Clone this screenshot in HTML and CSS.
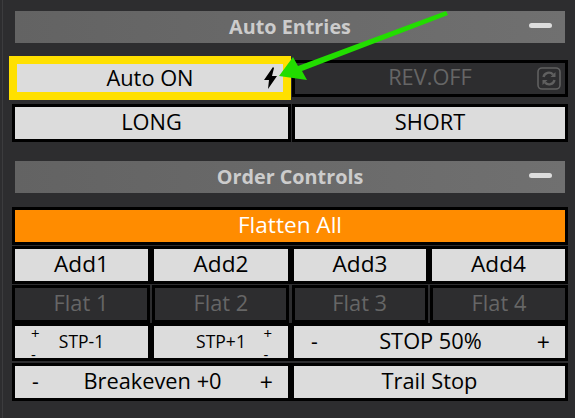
FILE: index.html
```html
<!DOCTYPE html>
<html lang="en">
<head>
  <meta charset="UTF-8" />
  <title>Order Panel</title>
  <link rel="stylesheet" href="styles.css">
</head>
<body>

<div class="panel">
  <div class="section-head head-first">
    <span>Auto Entries</span>
    <i class="collapse"></i>
  </div>

  <div class="row-auto">
    <div class="btn-auto">
      Auto ON
      <svg class="bolt" width="13" height="22" viewBox="0 0 13 22"><path d="M9 0 L0 13 L5 13 L4 22 L13 9 L8 9 L10 1 Z" fill="#000"/></svg>
    </div>
    <div class="btn off btn-rev">
      REV.OFF
      <svg class="sync" width="26" height="25" viewBox="0 0 26 25" fill="none" stroke="#606060">
        <rect x="2" y="2" width="22" height="21" rx="4" stroke-width="1.6"/>
        <path d="M7.5 11 A5.5 5.5 0 0 1 17 8.5" stroke-width="2.4"/>
        <path d="M18.5 14 A5.5 5.5 0 0 1 9 16.5" stroke-width="2.4"/>
        <path d="M14.5 11 L19.5 11 L19.5 6 Z M11.5 14 L6.5 14 L6.5 19 Z" fill="#606060" stroke="none"/>
      </svg>
    </div>
  </div>

  <div class="row row-two">
    <div class="btn">LONG</div>
    <div class="btn">SHORT</div>
  </div>

  <div class="section-head head-second">
    <span>Order Controls</span>
    <i class="collapse"></i>
  </div>

  <div class="controls">
    <div class="btn btn-flatten">Flatten All</div>

    <div class="row row-four">
      <div class="btn">Add1</div>
      <div class="btn">Add2</div>
      <div class="btn">Add3</div>
      <div class="btn">Add4</div>
    </div>

    <div class="row row-flat">
      <div class="btn off">Flat 1</div>
      <div class="btn off">Flat 2</div>
      <div class="btn off">Flat 3</div>
      <div class="btn off">Flat 4</div>
    </div>

    <div class="row row-stops">
      <div class="btn btn-small">
        <span class="stack stack-left"><b>+</b><b>-</b></span>
        <span>STP-1</span>
      </div>
      <div class="btn btn-small">
        <span>STP+1</span>
        <span class="stack stack-right"><b>+</b><b>-</b></span>
      </div>
      <div class="btn btn-steps"><em>-</em><span>STOP 50%</span><em class="plus">+</em></div>
    </div>

    <div class="row row-bottom">
      <div class="btn btn-steps"><em>-</em><span>Breakeven +0</span><em class="plus">+</em></div>
      <div class="btn">Trail Stop</div>
    </div>
  </div>

  <svg class="arrow" width="575" height="418" viewBox="0 0 575 418">
    <path d="M446 11 L448 15 L302 71 L307 80 L279 76 L293 57 L298 66 Z" fill="#22dd00"/>
  </svg>
</div>

</body>
</html>
```

FILE: styles.css
```css
* {
  box-sizing: border-box;
}

body {
  margin: 0;
  background: #2d2d2f;
  font-family: "Open Sans", "Noto Sans", sans-serif;
  font-size: 21.8px;
  color: #000;
}

.panel {
  position: relative;
  width: 575px;
  height: 418px;
  padding: 11px 7px 0 12px;
  overflow: hidden;
  background: linear-gradient(#3c3c3e, #3c3c3e) 2px 0 / 1px 100% no-repeat;
}

/* section headers */
.section-head {
  position: relative;
  display: flex;
  align-items: center;
  justify-content: center;
  height: 32px;
  margin: 0 3px;
  padding-bottom: 2px;
  background: linear-gradient(to right, #636363, #707070);
  color: #ccc;
  font-size: 19.8px;
  font-weight: 700;
}

.head-second {
  margin-top: 19px;
}

.collapse {
  position: absolute;
  top: 12px;
  right: 13px;
  width: 23px;
  height: 5px;
  border-radius: 3px;
  background: #ddd;
}

/* buttons */
.btn {
  position: relative;
  display: flex;
  align-items: center;
  justify-content: center;
  height: 38px;
  padding-bottom: 3px;
  border: 3px solid #000;
  background: #dcdcdc;
}

.off {
  background: #2d2d2f;
  color: #666;
}

.row-auto {
  display: grid;
  grid-template-columns: 282px 276px;
  align-items: center;
  height: 44px;
  margin: 13px 0 4px -3px;
  gap: 1px;
}

.btn-auto {
  position: relative;
  display: flex;
  align-items: center;
  justify-content: center;
  height: 44px;
  padding-bottom: 2px;
  border: 8px solid #ffe000;
  background: #dcdcdc;
}

.bolt {
  position: absolute;
  top: 3px;
  right: 6px;
}

.btn-rev {
  height: 37px;
}

.sync {
  position: absolute;
  top: 3px;
  right: 3px;
}

.row {
  display: grid;
}

.row-two {
  grid-template-columns: 279px 276px;
  column-gap: 1px;
}

.controls {
  display: flex;
  flex-direction: column;
  margin-top: 14px;
}

.btn-flatten {
  background: #ff8c00;
  color: #fff;
  font-size: 22.6px;
}

.row-four {
  grid-template-columns: 139px 140px 138px 139px;
  margin-top: 1px;
  font-size: 22.6px;
}

.row-flat {
  grid-template-columns: 138px 137px 136px 138px;
  justify-content: space-between;
  margin-top: 1px;
}

.row-stops {
  grid-template-columns: 139px 140px 277px;
}

.row-bottom {
  grid-template-columns: 279px 277px;
  margin-top: 2px;
}

/* small stop buttons, the + and - sit in a column on the outer side */
.btn-small {
  font-size: 17.5px;
}

.stack {
  position: absolute;
  top: 0;
  bottom: -4px;
  display: flex;
  flex-direction: column;
  justify-content: space-between;
  font-size: 15px;
  line-height: 15px;
}

.stack b {
  font-weight: 400;
}

.stack-left {
  left: 16px;
}

.stack-right {
  right: 16px;
}

.btn-steps {
  display: grid;
  grid-template-columns: 1fr auto 1fr;
  align-items: center;
  padding: 0 15px 3px 17px;
}

.btn-steps em {
  font-style: normal;
  font-size: 21px;
  line-height: 20px;
}

.btn-steps .plus {
  justify-self: end;
  margin-top: 3px;
  font-size: 23px;
}

.arrow {
  position: absolute;
  top: 0;
  left: 0;
}
```
